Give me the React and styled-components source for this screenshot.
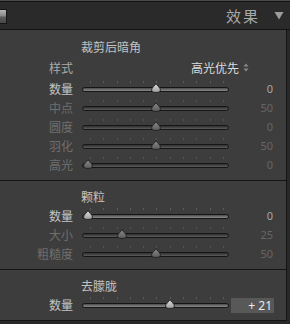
import React from "react";
import styled, { createGlobalStyle } from "styled-components";

const Global = createGlobalStyle`
  html, body { margin: 0; padding: 0; background: #282828; }
  body { width: 290px; height: 324px; overflow: hidden; font-family: "Noto Sans CJK SC", "Noto Sans", sans-serif; }
`;

const Page = styled.div`
  width: 290px;
  height: 324px;
  background: #282828;
  display: flex;
  flex-direction: column;
`;

const TopStrip = styled.div`
  height: 1px;
  background: #4a4a4a;
  border-bottom: 1px solid #141414;
`;

const Header = styled.div`
  height: 27px;
  background: #2a2a2a;
  border-bottom: 1px solid #121212;
  display: flex;
  align-items: center;
  justify-content: space-between;
  padding-right: 6px;
`;

const Knob = styled.div`
  width: 6px;
  height: 13px;
  margin-top: 1px;
  border: 1px solid #161616;
  border-left: none;
  background: linear-gradient(#b4b4b4 0%, #8a8a8a 45%, #5a5a5a 55%, #4a4a4a 100%);
`;

const HeaderRight = styled.div`
  display: flex;
  align-items: center;
  gap: 14px;
`;

const HeaderTitle = styled.span`
  font-size: 15px;
  letter-spacing: 2px;
  color: #a9a9a9;
  line-height: 1;
`;

const Panel = styled.div`
  width: 286px;
  background: #3d3d3d;
  border-right: 1px solid #141414;
  border-bottom: 1px solid #141414;
`;

const Section = styled.div`
  padding: ${(p) => p.$pt}px 0 ${(p) => p.$pb}px;
  & + & { border-top: 1px solid #141414; }
`;

const Title = styled.div`
  height: 18px;
  line-height: 18px;
  padding-left: 81px;
  font-size: 12px;
  color: #c2c2c2;
`;

const StyleRow = styled.div`
  height: 23px;
  display: grid;
  grid-template-columns: 73px 1fr;
  align-items: center;
  font-size: 12px;
`;

const Label = styled.span`
  text-align: right;
  font-size: 12px;
  line-height: 1;
  color: ${(p) => (p.$active ? "#c4c4c4" : "#6f6f6f")};
  white-space: nowrap;
`;

const StyleLabel = styled(Label)`
  color: #a9a9a9;
`;

const StyleValue = styled.div`
  justify-self: end;
  margin-right: 37px;
  display: flex;
  align-items: center;
  gap: 4px;
  color: #dcdcdc;
  font-size: 12px;
  line-height: 1;
`;

const Row = styled.div`
  height: ${(p) => p.$h || 19}px;
  display: grid;
  grid-template-columns: 73px 156px 44px;
  align-items: center;
`;

const SliderCell = styled.div`
  position: relative;
  height: 19px;
  margin-left: 9px;
  width: 147px;
  display: flex;
  flex-direction: column;
  align-self: start;
`;

const Ticks = styled.div`
  margin-top: 2px;
  height: 2px;
  padding: 0 5px 0 8px;
  display: flex;
  justify-content: space-between;
`;

const Tick = styled.span`
  width: 1px;
  height: 2px;
  background: ${(p) => (p.$active ? "#5e5e5e" : "#545454")};
`;

const Track = styled.div`
  margin-top: 4px;
  height: 5px;
  box-sizing: border-box;
  border: 1px solid #161616;
  border-radius: 3px;
  background: ${(p) =>
    p.$active
      ? "linear-gradient(#4a4a4a, #8c8c8c)"
      : "linear-gradient(#2e2e2e, #5c5c5c)"};
`;

const Thumb = styled.svg`
  position: absolute;
  top: 4px;
  width: 10px;
  height: 10px;
`;

const Value = styled.span`
  justify-self: end;
  font-family: "Noto Sans", "Liberation Sans", sans-serif;
  font-size: 11px;
  line-height: 1;
  color: ${(p) => (p.$active ? "#a6a6a6" : "#666666")};
`;

const ValueBox = styled.span`
  justify-self: end;
  width: 43px;
  height: 15px;
  margin-right: -1px;
  box-sizing: border-box;
  padding-right: 2px;
  background: #585858;
  display: flex;
  align-items: center;
  justify-content: flex-end;
  font-family: "Noto Sans", "Liberation Sans", sans-serif;
  font-size: 12px;
  color: #eaeaea;
`;

const Slider = ({ pct, active, id }) => (
  <SliderCell>
    <Ticks>
      {Array.from({ length: 11 }).map((_, i) => (
        <Tick key={i} $active={active} />
      ))}
    </Ticks>
    <Track $active={active} />
    <Thumb viewBox="0 0 10 10" style={{ left: `${1 + pct * 136}px` }}>
      <defs>
        <linearGradient id={id} x1="0" y1="0" x2="0" y2="1">
          <stop offset="0" stopColor={active ? "#e2e2e2" : "#8a8a8a"} />
          <stop offset="1" stopColor={active ? "#9c9c9c" : "#5c5c5c"} />
        </linearGradient>
      </defs>
      <path
        d="M5 0.6 C6 2.6 9.4 4.8 9.4 7 C9.4 9 7.6 9.4 5 9.4 C2.4 9.4 0.6 9 0.6 7 C0.6 4.8 4 2.6 5 0.6 Z"
        fill={`url(#${id})`}
        stroke="#1e1e1e"
        strokeWidth="0.9"
      />
    </Thumb>
  </SliderCell>
);

const SliderRow = ({ label, value, pct, active, id, box, h }) => (
  <Row $h={h}>
    <Label $active={active}>{label}</Label>
    <Slider pct={pct} active={active} id={id} />
    {box ? <ValueBox>{value}</ValueBox> : <Value $active={active}>{value}</Value>}
  </Row>
);

export default function App() {
  return (
    <Page>
      <Global />
      <TopStrip />
      <Header>
        <Knob />
        <HeaderRight>
          <HeaderTitle>效果</HeaderTitle>
          <svg width="10" height="9" viewBox="0 0 10 9">
            <path d="M0.5 1 L9.5 1 L5 8.5 Z" fill="#9c9c9c" />
          </svg>
        </HeaderRight>
      </Header>
      <Panel>
        <Section $pt={8} $pb={6}>
          <Title>裁剪后暗角</Title>
          <StyleRow>
            <StyleLabel>样式</StyleLabel>
            <StyleValue>
              高光优先
              <svg width="6" height="9" viewBox="0 0 6 9">
                <path d="M3 0.5 L5.5 3.5 L0.5 3.5 Z" fill="#8a8a8a" />
                <path d="M3 8.5 L5.5 5.5 L0.5 5.5 Z" fill="#8a8a8a" />
              </svg>
            </StyleValue>
          </StyleRow>
          <SliderRow label="数量" value="0" pct={0.5} active id="g1" />
          <SliderRow label="中点" value="50" pct={0.5} id="g2" />
          <SliderRow label="圆度" value="0" pct={0.5} id="g3" />
          <SliderRow label="羽化" value="50" pct={0.5} id="g4" />
          <SliderRow label="高光" value="0" pct={0} id="g5" />
        </Section>
        <Section $pt={7} $pb={6}>
          <Title>颗粒</Title>
          <SliderRow label="数量" value="0" pct={0} active id="g6" />
          <SliderRow label="大小" value="25" pct={0.25} id="g7" />
          <SliderRow label="粗糙度" value="50" pct={0.5} id="g8" />
        </Section>
        <Section $pt={7} $pb={5}>
          <Title>去朦胧</Title>
          <SliderRow label="数量" value="+ 21" pct={0.605} active box id="g9" h={20} />
        </Section>
      </Panel>
    </Page>
  );
}
